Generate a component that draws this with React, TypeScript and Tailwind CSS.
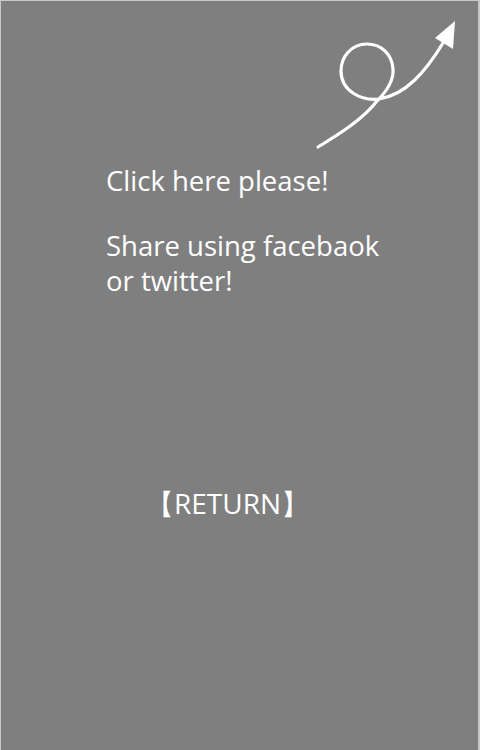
import React from "react";

export default function App() {
  return (
    <div
      className="relative w-[480px] h-[750px] bg-[#7f7f7f] border-l border-t border-r-2 border-[#c8c8c8] text-white overflow-hidden"
      style={{ fontFamily: '"Open Sans", "Noto Sans", sans-serif' }}
    >
      <svg
        className="absolute left-0 top-0"
        width="480"
        height="160"
        viewBox="0 0 480 160"
        fill="none"
      >
        <path
          d="M317,146 C340,132 362,118 376,100 C386,90 393,80 392,68 C391,53 380,43 366,43 C350,43 340,56 340,70 C340,90 360,100 378,98 C405,94 425,70 442,42"
          stroke="white"
          strokeWidth="3.2"
          strokeLinecap="round"
          strokeLinejoin="round"
        />
        <polygon points="454,20 434,37 452,48" fill="white" />
      </svg>
      <div className="pt-[162px] pl-[105px] text-[27.5px] leading-[35px]">
        <p>Click here please!</p>
        <p className="mt-[30px]">Share using facebaok</p>
        <p>or twitter!</p>
      </div>
      <div className="mt-[188px] w-[453px] text-center text-[28px] leading-[35px]">
        【RETURN】
      </div>
    </div>
  );
}
